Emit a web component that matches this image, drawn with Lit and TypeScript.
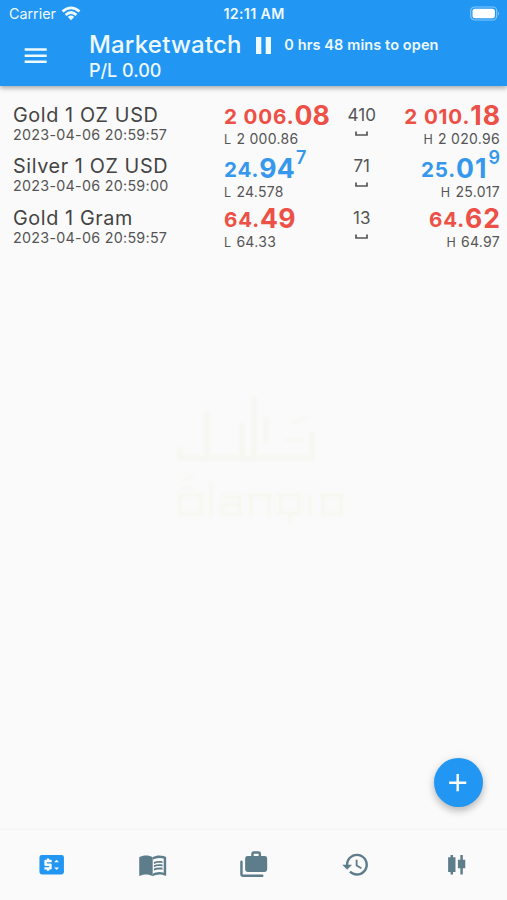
import { LitElement, html, css, svg } from "lit";
import { customElement, property } from "lit/decorators.js";

interface Price {
  lead: string;
  pips: string;
  frac?: string;
}

interface Quote {
  name: string;
  time: string;
  bid: Price;
  ask: Price;
  low: string;
  high: string;
  spread: string;
  up: boolean;
}

const QUOTES: Quote[] = [
  {
    name: "Gold 1 OZ USD", time: "2023-04-06 20:59:57", spread: "410", up: false,
    bid: { lead: "2 006.", pips: "08" }, ask: { lead: "2 010.", pips: "18" },
    low: "2 000.86", high: "2 020.96",
  },
  {
    name: "Silver 1 OZ USD", time: "2023-04-06 20:59:00", spread: "71", up: true,
    bid: { lead: "24.", pips: "94", frac: "7" }, ask: { lead: "25.", pips: "01", frac: "9" },
    low: "24.578", high: "25.017",
  },
  {
    name: "Gold 1 Gram", time: "2023-04-06 20:59:57", spread: "13", up: false,
    bid: { lead: "64.", pips: "49" }, ask: { lead: "64.", pips: "62" },
    low: "64.33", high: "64.97",
  },
];

@customElement("quote-row")
export class QuoteRow extends LitElement {
  @property({ attribute: false }) quote!: Quote;

  static styles = css`
    :host { display: block; height: 51.3px; }
    .row { display: grid; grid-template-columns: 211px 107.5px 60.5px 1fr; height: 100%; }
    .name { font-size: 19.8px; line-height: 24px; letter-spacing: 0.6px; color: #444; white-space: nowrap; }
    .time { font-size: 14.3px; line-height: 16.6px; letter-spacing: 0.28px; color: #555; white-space: nowrap; }
    .side { display: flex; flex-direction: column; }
    .ask { align-items: flex-end; }
    .price { display: flex; align-items: baseline; height: 27px; line-height: 24px; font-weight: 700; white-space: nowrap; color: #ec5046; }
    .up .price { color: #3598ec; height: 29px; line-height: 29px; }
    .lead { font-size: 20.6px; font-weight: 700; letter-spacing: 0.85px; position: relative; top: -1px; }
    .pips { font-size: 26.6px; letter-spacing: 0.2px; }
    .ask .pips { letter-spacing: 1px; }
    .ask .pips:last-child { margin-right: -1px; }
    .frac { font-size: 18px; font-weight: 600; align-self: flex-start; line-height: 16px; margin-top: -4px; margin-left: 1px; }
    .range { display: flex; gap: 5px; align-items: baseline; font-size: 14px; line-height: 17px; letter-spacing: 0.3px; color: #555; white-space: nowrap; }
    .tag { font-size: 12.5px; }
    .mid { display: flex; flex-direction: column; align-items: center; color: #555; font-size: 17px; line-height: 24px; }
    .mark { display: block; margin-top: 4px; }
  `;

  private price(p: Price) {
    return html`<div class="price">
      <span class="lead">${p.lead}</span><span class="pips">${p.pips}</span>${p.frac ? html`<span class="frac">${p.frac}</span>` : ""}
    </div>`;
  }

  render() {
    const q = this.quote;
    return html`<div class="row ${q.up ? "up" : ""}">
      <div>
        <div class="name">${q.name}</div>
        <div class="time">${q.time}</div>
      </div>
      <div class="side">
        ${this.price(q.bid)}
        <div class="range"><span class="tag">L</span><span>${q.low}</span></div>
      </div>
      <div class="mid">
        <span>${q.spread}</span>
        <svg class="mark" width="13" height="6" viewBox="0 0 13 6"><path d="M1 0.5V4H12V0.5" fill="none" stroke="#555" stroke-width="1.7" /></svg>
      </div>
      <div class="side ask">
        ${this.price(q.ask)}
        <div class="range"><span class="tag">H</span><span>${q.high}</span></div>
      </div>
    </div>`;
  }
}

const TABS = [
  {
    active: true,
    art: svg`<path fill-rule="evenodd" d="M4 4H20a2 2 0 0 1 2 2V18a2 2 0 0 1-2 2H4a2 2 0 0 1-2-2V6a2 2 0 0 1 2-2ZM12 10V8h-2V7H8v1H7a1 1 0 0 0-1 1v3a1 1 0 0 0 1 1h3v1H6v2h2v1h2v-1h1a1 1 0 0 0 1-1v-3a1 1 0 0 0-1-1H8v-1h4ZM16 16.25l2-2h-4l2 2ZM14 10h4l-2-2-2 2Z"/>`,
  },
  {
    active: false,
    art: svg`<path d="M12 6v15.5C10.55 20.4 8.45 20 6.5 20c-1.45 0-3.4.45-4.75 1.1-.05 0-.15.05-.25.05-.25 0-.5-.25-.5-.5V6c1.45-1.1 3.55-1.5 5.5-1.5S10.55 4.9 12 6z"/><path d="M21 5c-1.11-.35-2.33-.5-3.5-.5-1.95 0-4.05.4-5.5 1.5v15.5c1.35-.85 3.8-1.5 5.5-1.5 1.65 0 3.35.3 4.75 1.05.1.05.15.05.25.05.25 0 .5-.25.5-.5V6c-.6-.45-1.25-.75-2-1zm0 13.5c-1.1-.35-2.3-.5-3.5-.5-1.7 0-4.15.65-5.5 1.5V8c1.35-.85 3.8-1.5 5.5-1.5 1.2 0 2.4.15 3.5.5v11.5z"/><path d="M17.5 10.5c.88 0 1.73.09 2.5.26V9.24c-.79-.15-1.64-.24-2.5-.24-1.7 0-3.24.29-4.5.83v1.66c1.13-.64 2.7-.99 4.5-.99zM13 12.49v1.66c1.13-.64 2.7-.99 4.5-.99.88 0 1.73.09 2.5.26V11.9c-.79-.15-1.64-.24-2.5-.24-1.7 0-3.24.3-4.5.83zm4.5 1.84c-1.7 0-3.24.29-4.5.83v1.66c1.13-.64 2.7-.99 4.5-.99.88 0 1.73.09 2.5.26v-1.52c-.79-.16-1.64-.24-2.5-.24z"/>`,
  },
  {
    active: false,
    art: svg`<path fill-rule="evenodd" d="M1 9.5a1 1 0 0 1 2 0V20H19a1 1 0 0 1 0 2H3a2 2 0 0 1-2-2ZM18 5V3a2 2 0 0 0-2-2H12a2 2 0 0 0-2 2V5H7a2 2 0 0 0-2 2V16a2 2 0 0 0 2 2H21a2 2 0 0 0 2-2V7a2 2 0 0 0-2-2ZM12 3h4v2h-4Z"/>`,
  },
  {
    active: false,
    art: svg`<path d="M13 3c-4.97 0-9 4.03-9 9H1l3.89 3.89.07.14L9 12H6c0-3.87 3.13-7 7-7s7 3.13 7 7-3.13 7-7 7c-1.93 0-3.68-.79-4.94-2.06l-1.42 1.42C8.27 19.99 10.51 21 13 21c4.97 0 9-4.03 9-9s-4.03-9-9-9zm-1 5v5l4.28 2.54.72-1.21-3.5-2.08V8H12z"/>`,
  },
  {
    active: false,
    art: svg`<path d="M7 4h2v2h2v12H9v2H7v-2H5V6h2ZM15 4h2v4h2v7h-2v5h-2v-5h-2V8h2Z"/>`,
  },
];

@customElement("app-root")
export class AppRoot extends LitElement {
  static styles = css`
    :host { display: block; font-family: Inter, "Liberation Sans", sans-serif; }
    .screen { position: relative; display: flex; flex-direction: column; height: 900px; overflow: hidden; background: #fafafa; }
    .header { height: 86px; flex: none; background: #2296f3; color: #effaff; box-shadow: 0 2px 5px rgba(0, 0, 0, 0.34); }
    .status { display: grid; grid-template-columns: 1fr auto 1fr; align-items: center; height: 27px; padding: 0 7px 0 9px; }
    .carrier { display: flex; align-items: center; gap: 5px; font-size: 14.3px; }
    .clock { font-weight: 600; font-size: 14.2px; letter-spacing: 0.35px; margin-left: -1px; }
    .battery { justify-self: end; }
    .bar { display: flex; height: 59px; padding-left: 20.5px; }
    .menu { margin-top: 14px; margin-right: 39px; flex: none; }
    .title-line { display: flex; align-items: center; height: 36px; white-space: nowrap; }
    .title { font-size: 24px; font-weight: 500; letter-spacing: 0.22px; line-height: 36px; }
    .pause { margin: 0 13px 0 14.5px; }
    .timer { font-size: 14.5px; font-weight: 600; letter-spacing: 0.1px; position: relative; top: -1px; }
    .pl { font-size: 18px; font-weight: 500; line-height: 22px; margin-top: -3px; }
    .quotes { flex: 1; padding: 17px 7px 0 13px; }
    .watermark { position: absolute; left: 165px; top: 388px; filter: blur(1px); }
    .fab { position: absolute; right: 24.5px; bottom: 93px; width: 49px; height: 49px; border-radius: 50%; background: #2296f3; display: flex; align-items: center; justify-content: center; box-shadow: 0 4px 7px rgba(0, 0, 0, 0.22), 0 1px 12px rgba(0, 0, 0, 0.08); }
    .tabs { flex: none; height: 70px; display: grid; grid-template-columns: repeat(5, 1fr); place-items: center; background: #fafafa; border-top: 1px solid #f4f4f4; padding-left: 1px; }
    .tab { fill: #5e7d8b; display: block; }
    .active { fill: #2296f3; }
  `;

  render() {
    return html`<div class="screen">
      <div class="header">
        <div class="status">
          <div class="carrier">
            <span>Carrier</span>
            <svg width="20" height="15" viewBox="0 0 20 15" fill="none" stroke="#effaff" stroke-width="2.7">
              <path d="M1.5 5.6Q10-2 18.5 5.6" /><path d="M4.6 9Q10 4 15.4 9" /><path d="M10 14.2 6.8 11Q10 8.2 13.2 11Z" fill="#effaff" stroke="none" />
            </svg>
          </div>
          <span class="clock">12:11 AM</span>
          <svg class="battery" width="30" height="15" viewBox="0 0 30 15">
            <rect x="0.7" y="1" width="26" height="13" rx="4" fill="none" stroke="#84c7fa" stroke-width="1.2" />
            <rect x="2.5" y="2.8" width="22.4" height="9.4" rx="2.5" fill="#fff" />
            <path d="M28 5.5Q30 7.5 28 9.5Z" fill="#84c7fa" />
          </svg>
        </div>
        <div class="bar">
          <svg class="menu" width="29.4" height="29.4" viewBox="0 0 24 24" fill="#effaff"><path d="M3 18h18v-2H3v2zm0-5h18v-2H3v2zm0-7v2h18V6H3z" /></svg>
          <div>
            <div class="title-line">
              <span class="title">Marketwatch</span>
              <svg class="pause" width="15" height="17" viewBox="0 0 15 17" fill="#effaff"><path d="M0 0H5.3V17H0ZM9.7 0H15V17H9.7Z" /></svg>
              <span class="timer">0 hrs 48 mins to open</span>
            </div>
            <div class="pl">P/L 0.00</div>
          </div>
        </div>
      </div>
      <div class="quotes">${QUOTES.map((q) => html`<quote-row .quote=${q}></quote-row>`)}</div>
      <svg class="watermark" width="190" height="145" viewBox="0 0 190 145" fill="none" stroke="#f7f7f2" stroke-width="6">
        <path d="M15 60V70H147V44M42 24V70M77 35V70M89 9V70M101 28V54" />
        <path d="M18 92 29 87M127 35 145 29M119 52H139M15 100H30" stroke-width="2" />
        <path d="M15 107H36V126H15ZM46 94V128M57 109H75V126H57V117H75M86 128V107H104V128M115 107H134V125H115ZM125 125V137M145 107V128M158 107H176V126H158Z" stroke-width="5" />
      </svg>
      <div class="fab">
        <svg width="29.4" height="29.4" viewBox="0 0 24 24" fill="#fff"><path d="M19 13h-6v6h-2v-6H5v-2h6V5h2v6h6v2z" /></svg>
      </div>
      <div class="tabs">
        ${TABS.map((t) => html`<svg class="tab ${t.active ? "active" : ""}" width="29.4" height="29.4" viewBox="0 0 24 24">${t.art}</svg>`)}
      </div>
    </div>`;
  }
}
